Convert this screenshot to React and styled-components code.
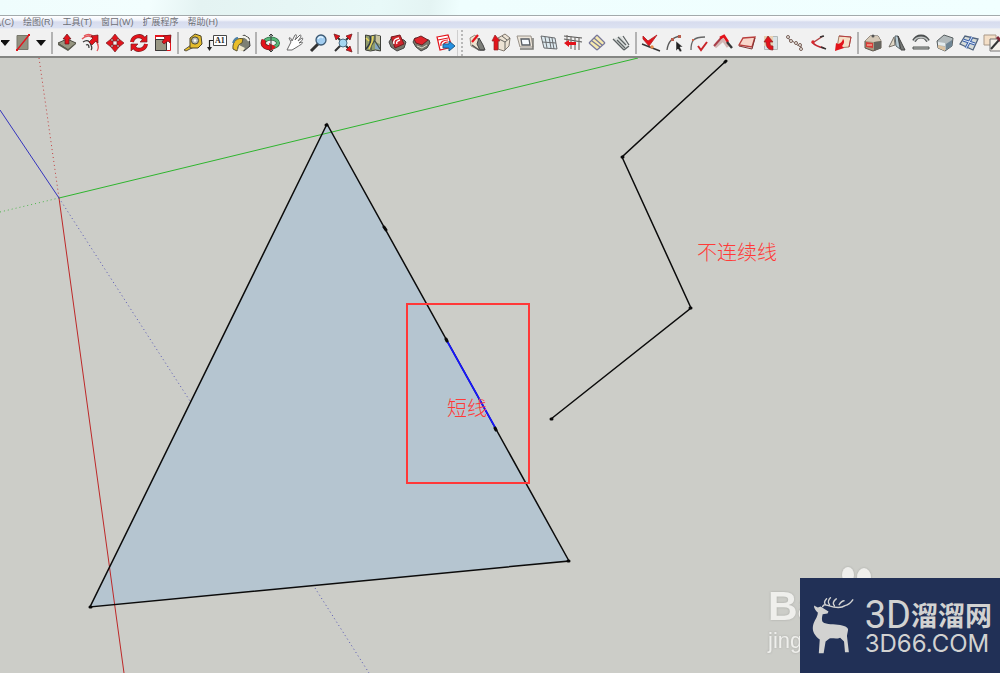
import React from "react";
import styled, { createGlobalStyle } from "styled-components";

const GlobalStyle = createGlobalStyle`
  * { box-sizing: border-box; }
  body {
    margin: 0;
    background: #cccdc8;
    font-family: "Liberation Sans", "Noto Sans CJK SC", sans-serif;
  }
`;

const Page = styled.div`
  display: flex;
  flex-direction: column;
  min-height: 100vh;
  position: relative;
  overflow: hidden;
`;

const TitleBar = styled.header`
  height: 16px;
  flex: none;
  border-bottom: 1px solid #a3aaac;
  background: linear-gradient(100deg, #effdfd 0%, #f3fefe 15%, #e4f3f2 20%, #e8f9f8 38%, #e4f4f3 43%, #effefe 46%, #f1ffff 100%);
`;

const MenuBar = styled.nav`
  display: flex;
  align-items: center;
  gap: 9px;
  height: 13px;
  flex: none;
  background: linear-gradient(#ffffff 0%, #f1f3fa 35%, #d7dcee 50%, #dce2f2 100%);
  border-bottom: 1px solid #e9ecf3;
`;

const MenuItem = styled.button`
  display: flex;
  justify-content: flex-end;
  width: ${(p) => (p.$clipped ? "14px" : "auto")};
  padding: 0;
  border: 0;
  background: none;
  overflow: hidden;
  color: #6e6f76;
  font: 9px/12px "Liberation Sans", "Noto Sans CJK SC", sans-serif;
  white-space: nowrap;
`;

const ToolBar = styled.div`
  display: flex;
  align-items: center;
  height: 29px;
  flex: none;
  overflow: hidden;
  padding-left: 1px;
  background: #f1f1f1;
  border-bottom: 2px solid #858683;
`;

const ToolGroup = styled.div`
  display: flex;
  flex: none;
`;

const ToolButton = styled.button`
  display: flex;
  justify-content: ${(p) => (p.$edge ? "flex-end" : "flex-start")};
  width: ${(p) => (p.$edge ? "10px" : p.$narrow ? "14px" : "24px")};
  height: 20px;
  padding: 0;
  border: 0;
  background: none;
  overflow: hidden;
  svg { display: block; flex: none; }
`;

const Separator = styled.div`
  flex: none;
  width: 6px;
  height: 22px;
  padding: 0 2px;
  background: #b3b3b3 content-box;
`;

const Grip = styled.div`
  flex: none;
  width: 8px;
  height: 26px;
  border-left: 1px solid #cfcfcf;
  &::after {
    content: "";
    display: block;
    height: 100%;
    margin-left: 3px;
    border-left: 2px dotted #b8b8b8;
  }
`;

const Canvas = styled.main`
  flex: 1;
  background: #cccdc8;
`;

const Drawing = styled.svg`
  display: block;
  width: 100%;
`;

const Note = styled.text`
  font: 300 20px "Noto Sans CJK SC", sans-serif;
  fill: #ff3b38;
`;

const Watermark = styled.div`
  position: absolute;
  right: 0;
  bottom: 0;
  width: 232px;
  height: 107px;
  padding-top: 17px;
  color: #efefec;
  filter: drop-shadow(0 0 1px #a9aaa6);
`;

const Paw = styled.svg`
  position: absolute;
  top: 0;
  left: 72px;
`;

const MarkName = styled.div`
  font: bold 41px/46px "Liberation Sans", sans-serif;
`;

const MarkSub = styled.div`
  font: 22px/24px "Liberation Sans", sans-serif;
`;

const Brand = styled.aside`
  position: absolute;
  right: 0;
  bottom: 0;
  display: flex;
  gap: 8px;
  width: 200px;
  height: 95px;
  padding: 18px 8px 0 12px;
  background: #213056;
  color: #d2d2d1;
`;

const BrandText = styled.div`
  padding-left: 2px;
  white-space: nowrap;
`;

const BrandName = styled.div`
  display: flex;
  align-items: center;
  height: 38px;
  font: bold 27px/38px "Noto Sans CJK SC", sans-serif;
`;

const BrandPrefix = styled.span`
  font: 38px/38px Roboto, sans-serif;
`;

const BrandSite = styled.div`
  font: 24px/20px Inter, sans-serif;
`;

const K = "#383838";
const R = "#e3131b";

const icons = {
  arrow: <path d="M-1 7h10l-5 6z" fill="#111" />,
  rect: (
    <>
      <path d="M6 2.5h11v14H6z" fill="#929180" stroke="#77776b" />
      <path d="M6 17L18 2" stroke={R} strokeWidth="1.3" />
      <path d="M5 16h2v2H5zM17 1h2v2h-2z" fill={R} />
    </>
  ),
  push: (
    <>
      <path d="M3 10l9-4 9 4-8 7z" fill="#969681" stroke="#4c4c42" />
      <path d="M3 10v2l10 6 8-7v-1l-8 6z" fill="#5d5d50" />
      <path d="M12 1L8 6h2v5h4V6h2z" fill={R} stroke="#65161a" strokeWidth=".7" />
    </>
  ),
  follow: (
    <>
      <path d="M3 6c5-5 11-3 14 2 3 4 3 7 1 10M5 3c3-2 6-2 9 0" stroke="#e45358" strokeWidth="1.3" />
      <path d="M4 9c4-3 7-1 8 3 1 2 1 4 0 5M7 12c2-1 3 0 3 3" stroke={K} strokeWidth="1.2" />
      <path d="M19 2l-7 1 2 2-4 4 3 3 4-4 2 2z" fill={R} stroke="#65161a" strokeWidth=".7" />
    </>
  ),
  move: (
    <path d="M12 1l4 5h-2v2h-4V6H8zM12 19l4-5h-2v-2h-4v2H8zM3 10l5-4v2h2v4H8v2zM21 10l-5-4v2h-2v4h2v2z" fill={R} stroke="#762326" strokeWidth=".7" />
  ),
  rotate: (
    <>
      <path d="M5 9c1-6 9-8 12-3M19 11c-1 6-9 8-12 3" stroke="#762326" strokeWidth="4" />
      <path d="M20 2v7h-7zM4 18v-7h7z" fill={R} stroke="#762326" strokeWidth=".7" />
      <path d="M5 9c1-6 9-8 12-3M19 11c-1 6-9 8-12 3" stroke={R} strokeWidth="2.8" />
    </>
  ),
  scale: (
    <>
      <path d="M4.5 2.5h15v15h-15z" fill="#fff" stroke={R} />
      <path d="M4.5 6.5h11v11h-11z" fill="#999885" stroke={K} />
      <path d="M4 3h9" stroke={R} strokeWidth="2" />
      <path d="M20 2l-8 1 2 2-3 4 2 2 4-3 2 2z" fill={R} stroke="#65161a" strokeWidth=".7" />
    </>
  ),
  tape: (
    <>
      <path d="M10 12l-7 5 2 1 8-4" fill="#e9be25" stroke={K} strokeWidth=".8" />
      <path d="M9 5l5-4 6 2 1 8-4 4H9z" fill="#e4bc2c" stroke="#4c4529" />
      <circle cx="14" cy="7.5" r="3.6" fill="#b8bcb8" stroke="#494735" />
      <circle cx="14" cy="7.5" r="1.3" fill="#fff" />
    </>
  ),
  label: (
    <>
      <path d="M8.5 2.5h13v10h-13z" fill="#fff" stroke="#494949" />
      <text x="10" y="10" fontFamily="Liberation Serif" fontWeight="bold" fontSize="8" fill="#222">A1</text>
      <path d="M8 7.5H4.5V15" stroke="#222" strokeWidth="1.2" />
      <path d="M2 14l2.500 4 2.500-4z" fill="#222" />
    </>
  ),
  paint: (
    <>
      <path d="M9 7l6-5 5 3 1 8-6 5-6-3z" fill="#7d8074" stroke={K} />
      <path d="M10 6c4-4 8-2 10 2" stroke="#f5f5ee" strokeWidth="2" />
      <path d="M4 16c-1-8 5-12 10-10l-1 4c-4 1-4 4-5 8z" fill="#e9be29" stroke="#595332" />
      <path d="M10 12l6 3-2 3-5-1z" fill="#efe8cd" />
      <path d="M4 10c1-3 3-5 5-5" stroke="#4d81a6" strokeWidth="2" />
    </>
  ),
  orbit: (
    <>
      <ellipse cx="12" cy="10" rx="7" ry="4.4" stroke="#2b5b3b" strokeWidth="4" />
      <ellipse cx="12" cy="10" rx="7" ry="4.4" stroke="#58b87a" strokeWidth="2.6" />
      <path d="M5 7c-3 6 3 9 9 7" stroke="#7b1d22" strokeWidth="5" />
      <path d="M5 7c-3 6 3 9 9 7" stroke={R} strokeWidth="3.6" />
      <path d="M10 10l7 4-6 4z" fill={R} />
      <path d="M12 1v18M10 3l2-2 2 2M10 17l2 2 2-2" stroke="#373c3a" />
    </>
  ),
  hand: (
    <path d="M4 17l4-8-2-4c1-1 2 0 3 3l3-6c2-1 2 1 0 5l5-5c2 0 1 2-2 6l4-3c2 0 0 3-3 5l3-1c2 1-2 3-5 5l-5 3z" fill="#fff" stroke="#686868" />
  ),
  zoom: (
    <>
      <path d="M4 18l7-7" stroke="#333" strokeWidth="3" />
      <circle cx="14" cy="7" r="5" fill="#a2cdf0" stroke="#3c5973" strokeWidth="1.3" />
      <path d="M11 6c1-2 3-3 5-1" stroke="#e3f4ff" strokeWidth="1.4" />
    </>
  ),
  extents: (
    <>
      <path d="M4 18l6-6M5 3l4 4M19 3l-4 4M19 17l-4-4" stroke="#333" strokeWidth="2" />
      <path d="M3 1l6 2-4 4zM21 1l-6 2 4 4zM21 19l-6-2 4-4z" fill={R} stroke="#762326" strokeWidth=".8" />
      <circle cx="12" cy="10" r="4" fill="#a5d6f1" stroke="#4c6c82" />
    </>
  ),
  map: (
    <>
      <path d="M4.500 2l5 1 5-1 5 1v15l-5-1-5 1-5-1z" fill="#8f9c6c" stroke="#3e403a" />
      <path d="M14 2l5 1v8l-5-2z" fill="#c8c4a0" />
      <path d="M14 10l5 3v4l-5-1z" fill="#86a9c4" />
      <path d="M9 3c2 6-1 9-4 13" stroke="#303944" strokeWidth="1.6" />
      <path d="M14 2v5l-4 6v4M14 8l5 8" stroke="#47514a" strokeWidth="1.3" />
      <path d="M12 3l-1 6-3 7M5 5l3 3" stroke="#ecd65b" strokeWidth="1.4" />
    </>
  ),
  warehouse: (
    <>
      <path d="M4 9l3-5 12 3 2 2-2 6-7 3-6-4z" fill="#77776a" stroke="#444" />
      <path d="M6 4l9-2 4 9-9 4z" fill="#d0252b" stroke="#761b20" />
      <path d="M9 11c-1-4 1-5 5-6M12 11c-1-2 0-3 3-4" stroke="#fff" strokeWidth="1.4" />
    </>
  ),
  share: (
    <>
      <path d="M4 9l2-4 14 2 1 3-3 5-6 3-5-4z" fill="#77776a" stroke="#444" />
      <path d="M5 6l7-3 7 4-6 5-6-2z" fill="#e0242b" stroke="#6c2023" />
      <path d="M8 13l5 2 5-3" stroke="#ddd9c8" />
    </>
  ),
  send: (
    <>
      <path d="M4 4l11-2 4 12-12 3z" fill="#fff" stroke={R} strokeWidth="1.2" />
      <path d="M8 13c-1-4 2-6 7-6M11 13c-1-2 1-4 4-4M5 7l10-2" stroke={R} strokeWidth="1.1" />
      <path d="M10 11h6V8l6 5-6 5v-3h-6z" fill="#2390e3" stroke="#255b84" />
    </>
  ),
  wall: (
    <>
      <path d="M5 5l5-3 4 6v9l-8-4z" fill="#eee3d0" stroke="#9a9184" />
      <path d="M14 5l4 7 2 5h-5l-3-6z" fill="#7c7e79" stroke="#444" />
      <path d="M7 12l7 5h5" stroke="#555" strokeWidth="1.4" />
      <path d="M13 2L7 9" stroke={R} strokeWidth="2.2" />
    </>
  ),
  extrude: (
    <>
      <path d="M9 5l7-4 5 4-1 8-5 5-6-2z" fill="#ece3d4" stroke="#82796f" />
      <path d="M10 6l6 3 5-4M16 9v8M13 3l5 4" stroke="#676661" />
      <path d="M6 2L3 8h2v9h4V8h2z" fill={R} stroke="#8f2427" strokeWidth=".7" />
    </>
  ),
  window: (
    <>
      <path d="M4 3h14l2 11H7z" fill="#ede6da" stroke="#99928a" />
      <path d="M8 6h8l1 6H9z" fill="#f7fbff" stroke="#575c63" strokeWidth="1.3" />
      <path d="M7 16h13V5" stroke="#797974" strokeWidth="1.5" />
    </>
  ),
  panels: (
    <>
      <path d="M4 3l14 2 2 11-13-1z" fill="#dce9ef" stroke="#686b6e" />
      <path d="M8 4l2 11M12 4l2 11M15 5l2 11M5 9l14 1" stroke="#686b6e" />
    </>
  ),
  fence: (
    <>
      <path d="M3 3l18 2M3 6l18 3" stroke="#555" strokeWidth="1.2" />
      <path d="M6 2v10M10 3v13M14 4v13M18 4v13" stroke="#77736e" strokeWidth="1.2" />
      <path d="M3 10l5-3v2h7v3H8v2z" fill={R} />
    </>
  ),
  stairs: (
    <>
      <path d="M4 10l8-8 8 8-8 7z" fill="#f6e9ae" />
      <path d="M4 10l8 7M7 8l8 6M9 5l8 7M12 2l8 8M4 10l8-8M12 17l8-7" stroke="#77779a" strokeWidth="1.2" />
    </>
  ),
  ramp: (
    <>
      <path d="M4 6l10 11 6-3-8-11" fill="#dce0df" />
      <path d="M4 6l11 11M8 7l8 8M9 4l8 8M14 3l6 9M15 17l5-4" stroke="#5c6263" strokeWidth="1.3" />
    </>
  ),
  check: (
    <>
      <path d="M4 3l5 5 9-6-8 11-6-7z" fill={R} stroke="#b8272b" strokeWidth=".9" />
      <path d="M3 11l18 7" stroke="#353535" strokeWidth="1.5" />
      <circle cx="13" cy="14" r="1.7" fill="#e68a48" />
    </>
  ),
  select: (
    <>
      <path d="M4 17c1-8 5-13 14-14" stroke="#595959" strokeWidth="1.3" />
      <path d="M8 5h3v3H8zM15 2h3v3h-3z" fill="#b75d4c" />
      <path d="M13 8v10l2-2 2 3 2-1-2-4h3z" fill="#222" stroke="#fff" strokeWidth=".5" />
    </>
  ),
  arcCheck: (
    <>
      <path d="M4 17c0-9 2-13 14-13" stroke="#666" strokeWidth="1.3" />
      <path d="M5 6h2v2H5z" fill="#cf6950" />
      <path d="M11 13l3 4 6-8" stroke="#c9252a" strokeWidth="2" />
    </>
  ),
  roof: (
    <>
      <path d="M4 14l8-7 5 7" stroke="#d3b6b4" strokeWidth="3" />
      <path d="M3 13l8-9" stroke="#a93e49" strokeWidth="2" />
      <path d="M9 5l4-2 4 6" stroke={R} strokeWidth="2.6" />
      <path d="M16 9l5 6" stroke="#353535" strokeWidth="2.4" />
    </>
  ),
  plane: (
    <>
      <path d="M4 12l4-7 12-1-3 10z" fill="#f8d7cb" stroke="#b93f3d" strokeWidth="1.4" />
      <path d="M4 13l13 3 3-11" stroke="#7e3534" />
    </>
  ),
  turn: (
    <>
      <path d="M5.500 3.500h13v13h-13z" fill="#d9e2e6" stroke="#b1b9b9" />
      <path d="M5 3h9v10H5z" fill="#ead0b2" />
      <path d="M9 3L5 9h2c0 5 2 8 7 8v-4c-3 0-3-2-3-4h3z" fill={R} stroke="#88272b" strokeWidth=".7" />
    </>
  ),
  chain: (
    <>
      <path d="M5 4l2 4 4 1 3 3 4 1v4" stroke="#6f5951" />
      <g fill="#f1eeea" stroke="#775f57">
        <circle cx="5" cy="4" r="1.5" /><circle cx="8" cy="8" r="1.5" />
        <circle cx="13" cy="10" r="1.5" /><circle cx="17" cy="12" r="1.5" />
        <circle cx="18" cy="16" r="1.5" />
      </g>
    </>
  ),
  branch: (
    <>
      <path d="M16 3L7 9" stroke="#b14343" strokeWidth="1.5" />
      <path d="M5 9c3 4 7 5 12 6" stroke="#c32630" strokeWidth="1.6" />
      <path d="M13 4l4-1M14 14l5 2" stroke="#333" strokeWidth="1.4" />
      <circle cx="6" cy="9" r="1.7" fill="#d9272d" />
    </>
  ),
  unfold: (
    <>
      <path d="M8 3l12 1-2 10-12 1z" fill="#f5e0c8" stroke="#a17d68" />
      <path d="M8 3l12 1-2 10" stroke="#b93e40" />
      <path d="M12 6c2 2 1 5-1 7l2 2-9 3 1-8 2 1c3-1 4-2 5-5z" fill={R} />
    </>
  ),
  weight: (
    <>
      <path d="M4 8l5-5h8l3 5v7l-8 3-8-3z" fill="#a8977f" stroke="#5c554a" />
      <path d="M4 8l9 1 7-1-3-5H9z" fill="#d5c9b8" />
      <path d="M13 9v9l7-3V8z" fill="#65645e" />
      <path d="M5 9l7 1v5l-7-1z" fill="#d83d38" />
      <circle cx="12" cy="3" r="1.5" fill="#555" />
      <path d="M6 12h5" stroke="#ffd6bd" />
    </>
  ),
  mirror: (
    <>
      <path d="M9 4L4 14l6-2z" fill="#e1d8c7" stroke="#77736b" />
      <path d="M10 3h3l2 13-4-3z" fill="#b9cdd6" stroke="#59656a" />
      <path d="M13 3l7 14h-4z" fill="#777b79" stroke="#444" />
    </>
  ),
  curve: (
    <>
      <path d="M5 8c3-6 11-6 14 0" stroke="#4b4f50" strokeWidth="4" />
      <path d="M5 8c3-5 11-5 14 0" stroke="#c0c4c3" strokeWidth="1.5" />
      <path d="M4 14h16v2H4z" fill="#bfc3c1" stroke="#515452" />
    </>
  ),
  box: (
    <>
      <path d="M4 8l7-6 9 3-1 8-7 5-7-3z" fill="#b2babc" stroke="#575e60" />
      <path d="M5 9l7 1v3l-7-1z" fill="#e3ebee" />
      <path d="M5 12l7 2v4l-7-3z" fill="#dbc3a2" />
      <path d="M13 11l6-4v6l-6 4z" fill="#6f8594" />
    </>
  ),
  grid: (
    <>
      <path d="M3 11l5-8 13 3-5 11z" fill="#d5dbd8" stroke="#51647d" strokeWidth="1.3" />
      <path d="M6 7l12 4M9 15l6-11" stroke="#4266ac" strokeWidth="3" />
      <path d="M6 7l12 4M9 15l6-11" stroke="#dbe8f8" />
    </>
  ),
  pick: (
    <>
      <path d="M3 2h12v10H3z" fill="#f4dfc7" stroke="#a99989" />
      <path d="M9 6h13v12H9z" fill="#f5f0e9" stroke="#777" />
      <path d="M10 16l8-9" stroke="#333" strokeWidth="2" />
      <path d="M16 4l5 5" stroke="#7e2635" strokeWidth="3" />
    </>
  ),
};

const groups = [
  ["push", "follow", "move", "rotate", "scale"],
  ["tape", "label", "paint"],
  ["orbit", "hand", "zoom", "extents"],
  ["map", "warehouse", "share", "send"],
  ["wall", "extrude", "window", "panels", "fence", "stairs", "ramp"],
  ["check", "select", "arcCheck", "roof", "plane", "turn", "chain", "branch", "unfold"],
  ["weight", "mirror", "curve", "box", "grid", "pick"],
];

const GRIP_BEFORE = 4;

const menus = ["几(C)", "绘图(R)", "工具(T)", "窗口(W)", "扩展程序", "帮助(H)"];

function Tool({ name, edge }) {
  const narrow = name === "arrow";
  return (
    <ToolButton type="button" aria-label={name} $narrow={narrow} $edge={edge}>
      <svg width={narrow ? 12 : 24} height="20" viewBox={narrow ? "-2 0 12 20" : "0 0 24 20"} fill="none">
        {icons[name]}
      </svg>
    </ToolButton>
  );
}

function Model() {
  return (
    <Drawing viewBox="0 58 1000 615" preserveAspectRatio="xMinYMin meet" role="img" aria-label="模型">
      <path d="M327 124L569 561L90 607z" fill="#b5c5d0" />
      <g fill="none" strokeWidth="1">
        <path d="M59 198L638 58" stroke="#2eb52e" />
        <path d="M0 212L59 198" stroke="#4eb54e" strokeDasharray="1 3" />
        <path d="M59 198L124 673" stroke="#bd2828" />
        <path d="M39 58L59 198" stroke="#c24040" strokeDasharray="1 3" />
        <path d="M0 110L59 198" stroke="#3434bd" />
        <path d="M59 198L190 401M315 588L369 673" stroke="#5555b5" strokeDasharray="1 3" />
      </g>
      <g fill="none" stroke="#0b0b0b" strokeWidth="1.5">
        <path d="M327 124L569 561L90 607z" />
        <path d="M726 61L622 157L691 308L551 419" />
      </g>
      <path d="M447 341L496 429" stroke="#1515ff" strokeWidth="1.7" />
      <g stroke="#080808" strokeWidth="3" strokeLinecap="round">
        <path d="M326 125h1M568 561h1M90 607h1M384 227l2 3M446 339l1 2M495 428l1 2M725 62l1-1M622 157h1M690 308h1M551 419h1" />
      </g>
      <path d="M407 304h122v179H407z" fill="none" stroke="#ff3838" strokeWidth="2" />
      <Note x="447" y="416">短线</Note>
      <Note x="697" y="260">不连续线</Note>
    </Drawing>
  );
}

function Deer() {
  return (
    <svg width="44" height="60" viewBox="0 0 44 60" fill="#d2d2d1" aria-hidden="true">
      <path d="M2 9l4 2 3-1 3 2 5 3-1 2-5 1c-1 4-1 6 0 8 4 3 12 2 18 3 6 1 9 3 8 6l-1 5 2 17h-4l-1-11-4-4c-4 2-8 0-11 1l-4 3-2 12H7l1-14C3 40 0 36 1 30c1-6 5-9 5-14-2-1-4-4-4-7z" />
      <path d="M11 10c1-3 3-2 6-1 6 2 13 3 17 0 4-1 6-3 8-6M14 8c-2-2-1-4 1-6M18 8c-2-2-1-5 1-7M23 9c-2-2-1-5 2-7M28 8c2-3 3-4 5-4" fill="none" stroke="#d2d2d1" strokeWidth="1.500" strokeLinecap="round" />
    </svg>
  );
}

export default function App() {
  return (
    <Page>
      <GlobalStyle />
      <TitleBar />
      <MenuBar>
        {menus.map((m, i) => <MenuItem key={m} type="button" $clipped={i === 0}>{m}</MenuItem>)}
      </MenuBar>
      <ToolBar role="toolbar">
        <ToolGroup>
          <Tool name="arrow" edge />
          <Tool name="rect" />
          <Tool name="arrow" />
        </ToolGroup>
        {groups.map((g, i) => (
          <React.Fragment key={g[0]}>
            {i === GRIP_BEFORE ? <Grip /> : <Separator />}
            <ToolGroup>
              {g.map((n) => <Tool key={n} name={n} />)}
            </ToolGroup>
          </React.Fragment>
        ))}
      </ToolBar>
      <Canvas>
        <Model />
      </Canvas>
      <Watermark>
        <Paw width="36" height="30" viewBox="0 0 36 30" fill="#efefec" aria-hidden="true">
          <ellipse cx="8" cy="9" rx="6" ry="8" />
          <ellipse cx="24" cy="11" rx="7" ry="9" />
        </Paw>
        <MarkName>Ba</MarkName>
        <MarkSub>jing</MarkSub>
      </Watermark>
      <Brand>
        <Deer />
        <BrandText>
          <BrandName><BrandPrefix>3D</BrandPrefix>溜溜网</BrandName>
          <BrandSite>3D66.COM</BrandSite>
        </BrandText>
      </Brand>
    </Page>
  );
}
